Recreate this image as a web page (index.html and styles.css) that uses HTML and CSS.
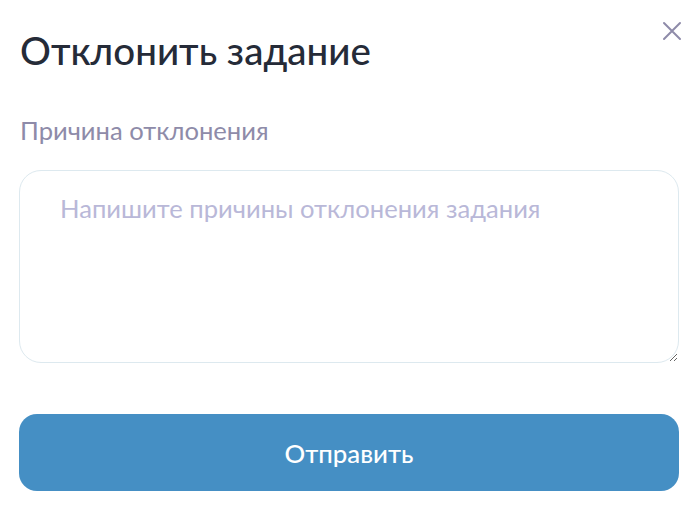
FILE: index.html
```html
<!DOCTYPE html>
<html lang="ru">
<head>
<meta charset="utf-8">
<link rel="stylesheet" href="styles.css">
</head>
<body>
<div class="modal">
  <button class="close" aria-label="Закрыть">
    <svg width="20" height="20" viewBox="0 0 20 20"><path d="M2 2 L18 18 M18 2 L2 18" stroke="#8e8ba9" stroke-width="2" stroke-linecap="round"/></svg>
  </button>
  <h1 class="title">Отклонить задание</h1>
  <label class="label" for="reason">Причина отклонения</label>
  <textarea id="reason" class="field" placeholder="Напишите причины отклонения задания"></textarea>
  <button class="submit">Отправить</button>
</div>
</body>
</html>
```
FILE: styles.css
```css
html, body {
  margin: 0;
  padding: 0;
  background: #ffffff;
}
body {
  font-family: Lato, "Noto Sans", sans-serif;
}
.modal {
  position: relative;
  padding: 26px 19px 0 19px;
  display: flex;
  flex-direction: column;
}
.close {
  position: absolute;
  top: 21px;
  right: 16px;
  width: 20px;
  height: 20px;
  padding: 0;
  border: 0;
  background: none;
  display: flex;
}
.title {
  margin: 0 0 0 1px;
  font-size: 38.5px;
  font-weight: 500;
  line-height: 48px;
  color: #252b38;
}
.label {
  margin: 40px 0 0 1px;
  font-size: 25.6px;
  line-height: 32px;
  color: #8e8ba9;
}
.field {
  margin-top: 24px;
  height: 193px;
  box-sizing: border-box;
  border: 1px solid #dde9ef;
  border-radius: 22px;
  padding: 22px 40px;
  font-family: Lato, "Noto Sans", sans-serif;
  font-size: 25.6px;
  line-height: 30px;
  color: #252b38;
  outline: none;
  resize: vertical;
}
.field::placeholder {
  color: #b9b8d8;
}
.submit {
  margin-top: 51px;
  height: 77px;
  border: 0;
  border-radius: 18px;
  background: #458fc4;
  color: #ffffff;
  font-family: Lato, "Noto Sans", sans-serif;
  font-size: 25.8px;
  font-weight: 500;
}
```
